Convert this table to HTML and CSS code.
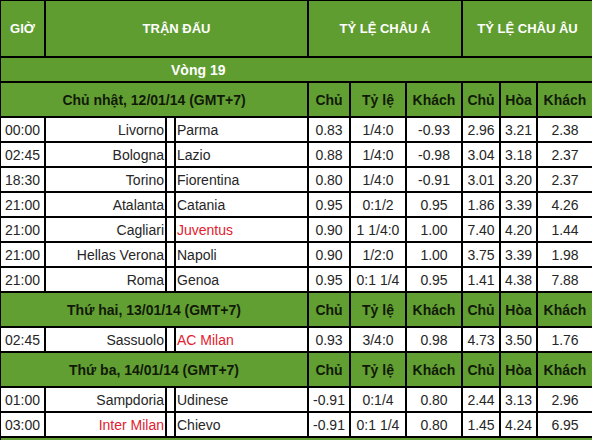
FILE: index.html
```html
<!DOCTYPE html>
<html lang="vi">
<head>
<meta charset="utf-8">
<title>Lịch thi đấu</title>
<link rel="stylesheet" href="styles.css">
</head>
<body>
<div class="board">
  <div class="c hd">GIỜ</div>
  <div class="c hd s3">TRẬN ĐẤU</div>
  <div class="c hd s3">TỶ LỆ CHÂU Á</div>
  <div class="c hd s3 last">TỶ LỆ CHÂU ÂU</div>

  <div class="c round full">Vòng 19</div>

  <div class="c day s4">Chủ nhật, 12/01/14 (GMT+7)</div>
  <div class="c sub">Chủ</div><div class="c sub">Tỷ lệ</div><div class="c sub">Khách</div>
  <div class="c sub">Chủ</div><div class="c sub">Hòa</div><div class="c sub last">Khách</div>

  <div class="c t">00:00</div><div class="c home">Livorno</div><div class="c sep"></div><div class="c away">Parma</div>
  <div class="c n">0.83</div><div class="c n">1/4:0</div><div class="c n">-0.93</div><div class="c n">2.96</div><div class="c n">3.21</div><div class="c n last">2.38</div>

  <div class="c t">02:45</div><div class="c home">Bologna</div><div class="c sep"></div><div class="c away">Lazio</div>
  <div class="c n">0.88</div><div class="c n">1/4:0</div><div class="c n">-0.98</div><div class="c n">3.04</div><div class="c n">3.18</div><div class="c n last">2.37</div>

  <div class="c t">18:30</div><div class="c home">Torino</div><div class="c sep"></div><div class="c away">Fiorentina</div>
  <div class="c n">0.80</div><div class="c n">1/4:0</div><div class="c n">-0.91</div><div class="c n">3.01</div><div class="c n">3.20</div><div class="c n last">2.37</div>

  <div class="c t">21:00</div><div class="c home">Atalanta</div><div class="c sep"></div><div class="c away">Catania</div>
  <div class="c n">0.95</div><div class="c n">0:1/2</div><div class="c n">0.95</div><div class="c n">1.86</div><div class="c n">3.39</div><div class="c n last">4.26</div>

  <div class="c t">21:00</div><div class="c home">Cagliari</div><div class="c sep"></div><div class="c away red">Juventus</div>
  <div class="c n">0.90</div><div class="c n">1 1/4:0</div><div class="c n">1.00</div><div class="c n">7.40</div><div class="c n">4.20</div><div class="c n last">1.44</div>

  <div class="c t">21:00</div><div class="c home">Hellas Verona</div><div class="c sep"></div><div class="c away">Napoli</div>
  <div class="c n">0.90</div><div class="c n">1/2:0</div><div class="c n">1.00</div><div class="c n">3.75</div><div class="c n">3.39</div><div class="c n last">1.98</div>

  <div class="c t">21:00</div><div class="c home">Roma</div><div class="c sep"></div><div class="c away">Genoa</div>
  <div class="c n">0.95</div><div class="c n">0:1 1/4</div><div class="c n">0.95</div><div class="c n">1.41</div><div class="c n">4.38</div><div class="c n last">7.88</div>

  <div class="c day s4">Thứ hai, 13/01/14 (GMT+7)</div>
  <div class="c sub">Chủ</div><div class="c sub">Tỷ lệ</div><div class="c sub">Khách</div>
  <div class="c sub">Chủ</div><div class="c sub">Hòa</div><div class="c sub last">Khách</div>

  <div class="c t">02:45</div><div class="c home">Sassuolo</div><div class="c sep"></div><div class="c away red">AC Milan</div>
  <div class="c n">0.93</div><div class="c n">3/4:0</div><div class="c n">0.98</div><div class="c n">4.73</div><div class="c n">3.50</div><div class="c n last">1.76</div>

  <div class="c day s4">Thứ ba, 14/01/14 (GMT+7)</div>
  <div class="c sub">Chủ</div><div class="c sub">Tỷ lệ</div><div class="c sub">Khách</div>
  <div class="c sub">Chủ</div><div class="c sub">Hòa</div><div class="c sub last">Khách</div>

  <div class="c t">01:00</div><div class="c home">Sampdoria</div><div class="c sep"></div><div class="c away">Udinese</div>
  <div class="c n">-0.91</div><div class="c n">0:1/4</div><div class="c n">0.80</div><div class="c n">2.44</div><div class="c n">3.13</div><div class="c n last">2.96</div>

  <div class="c t">03:00</div><div class="c home red">Inter Milan</div><div class="c sep"></div><div class="c away">Chievo</div>
  <div class="c n">-0.91</div><div class="c n">0:1 1/4</div><div class="c n">0.80</div><div class="c n">1.45</div><div class="c n">4.24</div><div class="c n last">6.95</div>

  <div class="c tail full"></div>
</div>
</body>
</html>
```

FILE: styles.css
```css
html, body {
  margin: 0;
  padding: 0;
  background: #ffffff;
  overflow: hidden;
}

.board {
  display: grid;
  grid-template-columns: 45px 121px 9px 133px 42px 56px 56px 38px 37px 54px;
  width: max-content;
  border-left: 1px solid #000;
  border-top: 1px solid #000;
  font-family: "Liberation Sans", Arial, sans-serif;
  font-size: 14px;
  color: #262626;
}

.c {
  box-sizing: border-box;
  border-right: 2px solid #000;
  border-bottom: 2px solid #000;
  display: flex;
  align-items: center;
  justify-content: center;
  height: 25px;
  white-space: nowrap;
  overflow: hidden;
}

.c.last { border-right: none; }

.s3 { grid-column: span 3; }
.s4 { grid-column: span 4; }
.full { grid-column: span 10; border-right: none; }

.hd {
  height: 57px;
  background: #609d30;
  color: #ffffff;
  font-weight: bold;
  font-size: 13px;
}

.round {
  height: 25px;
  background: #609d30;
  color: #ffffff;
  font-weight: bold;
  justify-content: flex-start;
  padding-left: 170px;
}

.day, .sub {
  height: 35px;
  background: #629f32;
  color: #111a08;
  font-weight: bold;
}

.tail {
  height: 3px;
  border-bottom: none;
  background: #629f32;
}

.t {
  justify-content: flex-start;
  padding-left: 4px;
}

.home {
  justify-content: flex-end;
  padding-right: 1px;
}

.away {
  justify-content: flex-start;
  padding-left: 1px;
}

.red { color: #e3202e; }
```
